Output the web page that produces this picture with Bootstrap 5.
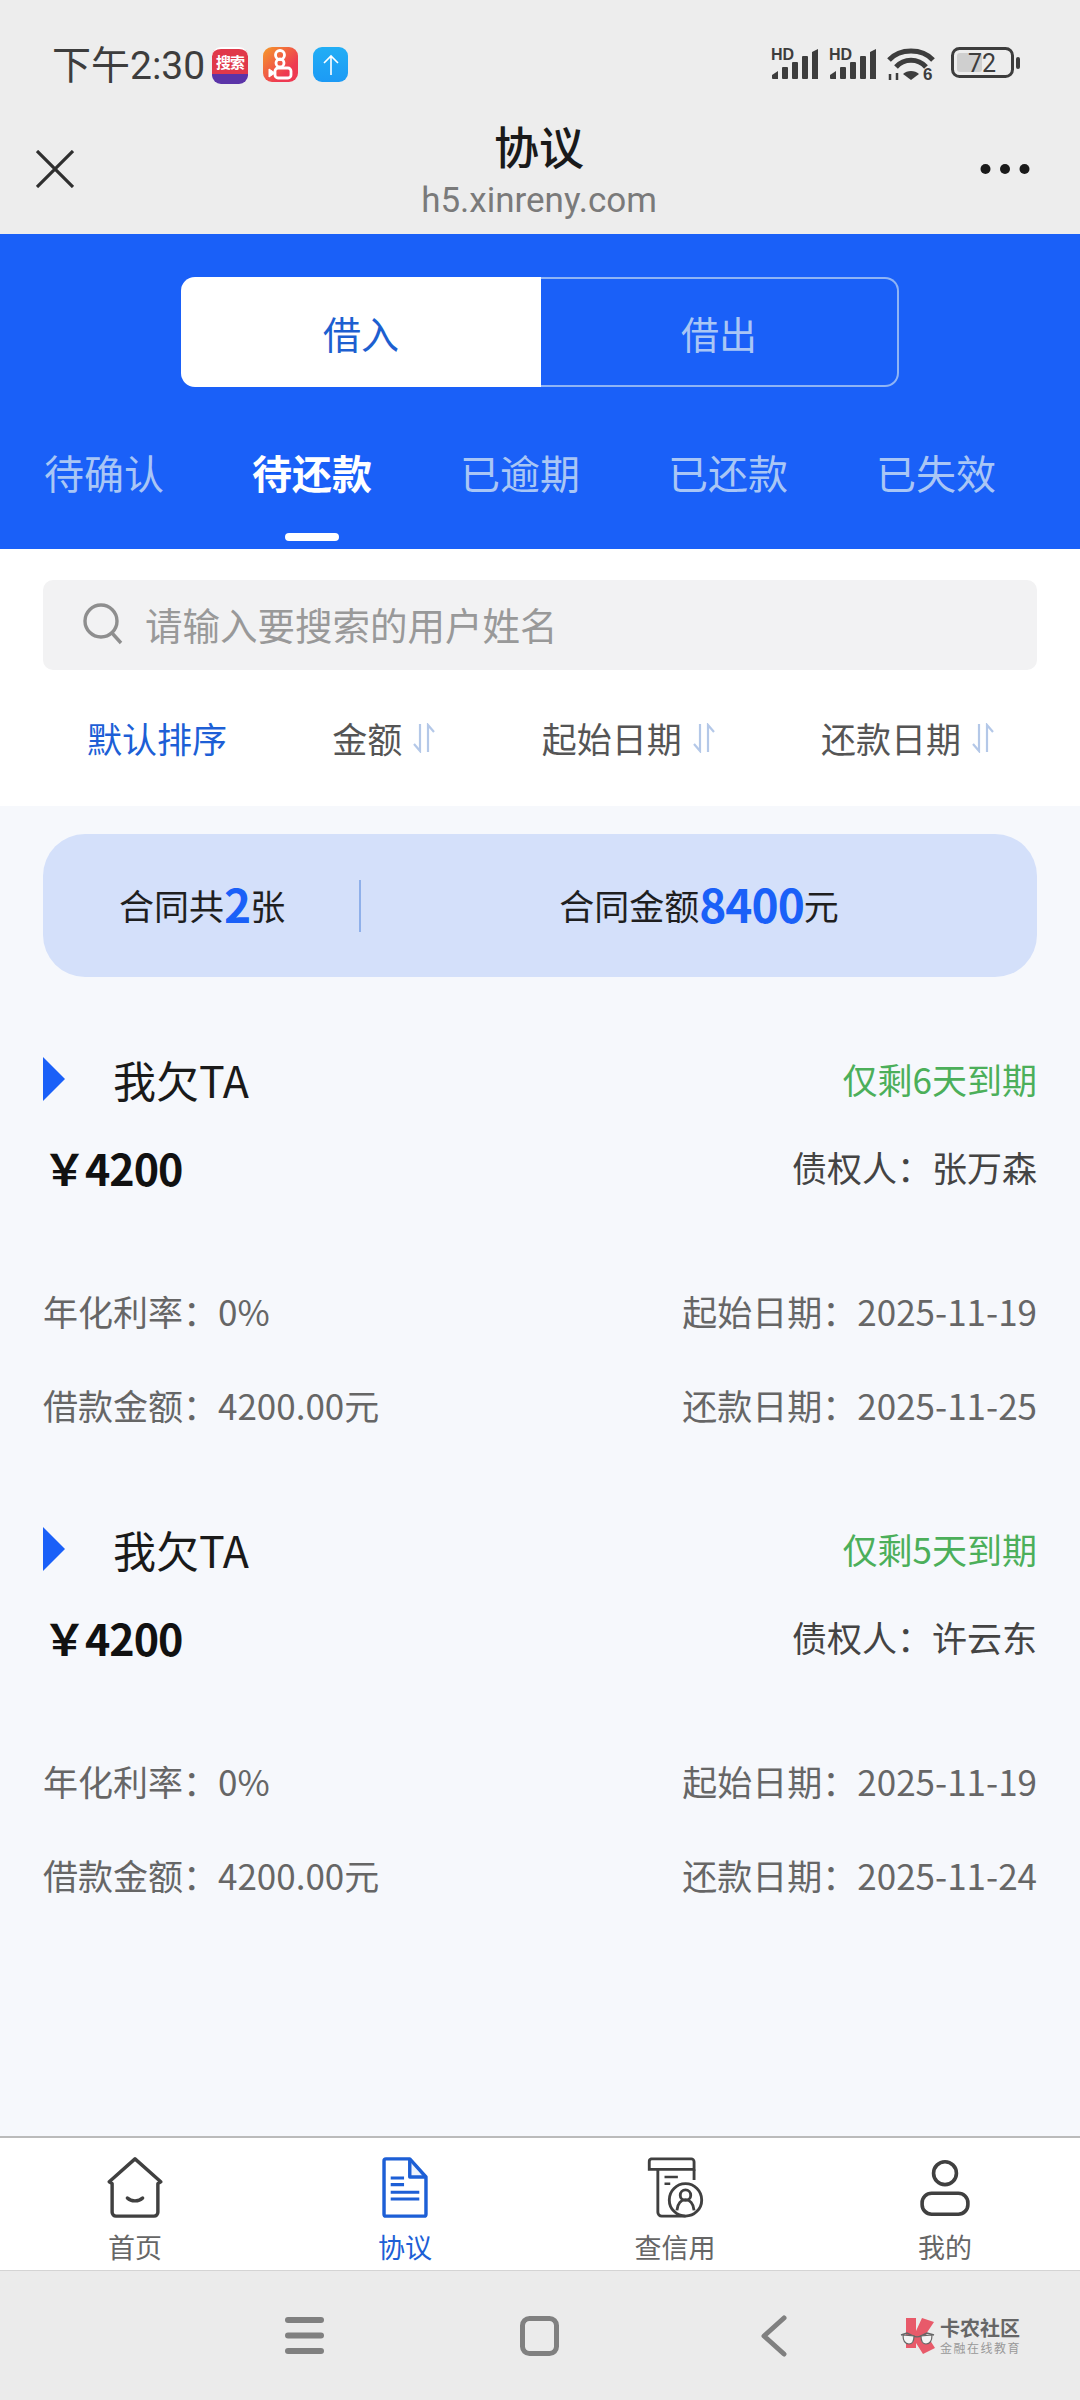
<!DOCTYPE html>
<html lang="zh-CN">
<head>
  <meta charset="UTF-8" />
  <meta name="viewport" content="width=device-width, initial-scale=1.0"/>
  <title>协议</title>
  <link href="https://cdn.jsdelivr.net/npm/bootstrap@5.3.0/dist/css/bootstrap.min.css" rel="stylesheet"/>
  <style>
    body { width: 1080px; height: 2400px; overflow: hidden; background: #f6f8fc; font-family: "Noto Sans CJK SC", "Liberation Sans", sans-serif; color: #1a1a1a; }
    .page-wrap { height: 2400px; }

    .status-bar { height: 110px; background: #ededed; padding: 47px 59px 0 52px; }
    .status-time { font-family: "Roboto", "Noto Sans CJK SC", sans-serif; font-size: 39px; line-height: 38px; color: #3d3d3d; width: 160px; white-space: nowrap; }
    .app-icon { width: 35px; height: 35px; border-radius: 9px; flex: none; }
    .app-search { width: 36px; height: 37px; background: #e0384a; color: #fff; font-size: 15px; line-height: 25px; font-weight: 700; text-align: center; overflow: hidden; border-top: 2px solid #fff; border-bottom: 10px solid #5b34a8; margin-right: 15px; white-space: nowrap; letter-spacing: -1px; }
    .app-kuai { background: linear-gradient(135deg, #f59a2a, #ee3a52 70%); margin-right: 15px; }
    .app-up { background: linear-gradient(180deg, #22aef5, #1c9af5); }

    .title-bar { height: 124px; background: #ededed; padding: 0 50px 0 36px; }
    .title-main { font-size: 45px; line-height: 60px; margin-top: 6px; margin-right: 2px; color: #1a1a1a; font-weight: 500; }
    .title-url { font-family: "Roboto", sans-serif; font-size: 35px; line-height: 40px; margin-top: 5px; margin-right: 2px; color: #7a7a7a; }
    .title-center { position: absolute; left: 0; right: 0; top: 0; }
    .title-icon { position: relative; top: -3px; }

    .blue-head { height: 315px; background: #1a60f8; }
    .seg-wrap { width: 718px; height: 110px; margin: 43px 0 0 181px; font-size: 38px; }
    .seg-on { width: 360px; background: #fff; color: #1d5fd0; border-radius: 14px 0 0 14px; }
    .seg-off { flex: 1; color: #a9c6f5; border: 2px solid #8fb4f5; border-left: 0; border-radius: 0 14px 14px 0; }
    .tab-row { padding: 0; margin-top: 55px; width: 1040px; }
    .tab-item { width: 208px; font-size: 40px; line-height: 60px; color: #a9c6f5; text-align: center; }
    .tab-item.is-on { color: #fff; font-weight: 700; position: relative; }
    .tab-item.is-on::after { content: ""; position: absolute; left: 77px; bottom: -39px; width: 54px; height: 8px; border-radius: 4px; background: #fff; }

    .filter-box { height: 257px; background: #fff; padding: 31px 43px 0; }
    .search-box { height: 90px; background: #f2f2f3; border-radius: 10px; padding-left: 40px; padding-bottom: 2px; font-size: 37.500px; color: #999; gap: 22px; }
    .sort-row { padding: 0 42px 0 44px; margin-top: 41px; font-size: 35px; line-height: 54px; color: #555; }
    .sort-row .is-on { color: #1d5fd6; }
    .sort-col { gap: 10px; }

    .sum-box { height: 143px; margin: 28px 43px 0; background: #d4e0fa; border-radius: 42px; font-size: 35px; color: #1f1f1f; }
    .sum-left { width: 318px; padding-left: 76px; height: 52px; border-right: 2px solid #8fb0ea; }
    .sum-num { font-size: 46px; color: #1a60f8; font-weight: 700; line-height: 1; letter-spacing: -1px; margin-top: -5px; }
    .sum-right { flex: 1; }

    .bill-item { padding: 0 43px; height: 470px; }
    .bill-first { margin-top: 65px; }
    .bill-head { height: 74px; }
    .bill-mark { width: 0; height: 0; border-left: 22px solid #1a60f8; border-top: 22px solid transparent; border-bottom: 22px solid transparent; margin-right: 48px; }
    .bill-who { font-size: 43px; color: #1a1a1a; }
    .bill-left { font-size: 35px; color: #4caf5a; }
    .bill-money-row { height: 58px; margin-top: 22px; }
    .bill-money { font-size: 43px; font-weight: 700; color: #111; letter-spacing: -1px; }
    .bill-owner { font-size: 35px; color: #444; }
    .bill-line { font-size: 35px; color: #666; height: 52px; }
    .bill-line1 { margin-top: 89px; }
    .bill-line2 { margin-top: 42px; }

    .tab-bar { height: 134px; background: #fff; border-top: 2px solid #bbb; }
    .tab-cell { width: 270px; padding-top: 19px; font-size: 27px; line-height: 40px; color: #666; }
    .tab-cell svg { display: block; height: 61px; margin-bottom: 9px; }
    .tab-cell.is-on { color: #1d5fd6; }

    .sys-bar { height: 130px; background: #ebebeb; border-top: 1px solid #d4d4d4; padding-left: 285px; }
    .sys-home { margin-left: 196px; }
    .sys-back { margin-left: 202px; }
    .sys-logo { margin-left: 113px; width: 122px; }
    .logo-big { font-size: 20px; line-height: 24px; font-weight: 700; color: #666; white-space: nowrap; }
    .logo-small { font-size: 12px; line-height: 16px; color: #999; letter-spacing: 1.500px; white-space: nowrap; }
  </style>
</head>
<body>
  <div class="page-wrap d-flex flex-column">

    <div class="status-bar d-flex align-items-start">
      <div class="status-time">下午2:30</div>
      <div class="app-icon app-search">搜索</div>
      <div class="app-icon app-kuai d-flex align-items-center justify-content-center">
        <svg width="28" height="31" viewBox="0 0 28 31" fill="none" stroke="#fff" stroke-width="2.800"><circle cx="13" cy="6" r="4.500"/><circle cx="13" cy="14" r="4"/><rect x="8" y="19" width="16" height="10" rx="3"/><path d="M8 24 2 20v8l6-4" fill="#fff" stroke-width="1"/></svg>
      </div>
      <div class="app-icon app-up d-flex align-items-center justify-content-center">
        <svg width="18" height="22" viewBox="0 0 18 22" fill="none" stroke="#fff" stroke-width="1.600"><path d="M9 21V2M2 9l7-7 7 7"/></svg>
      </div>
      <div class="ms-auto d-flex align-items-start">
        <svg width="50" height="33" viewBox="0 0 50 33" fill="#3d3d3d"><text x="0" y="13" font-family="Liberation Sans" font-size="16" font-weight="700">HD</text><path d="M1 28l6-4v8H2a1 1 0 0 1-1-1z"/><rect x="11" y="20" width="6" height="12" rx="1"/><rect x="21" y="15" width="6" height="17" rx="1"/><rect x="31" y="9" width="6" height="23" rx="1"/><path d="M41 5l6-3v30h-6z"/></svg>
        <svg class="ms-2" width="50" height="33" viewBox="0 0 50 33" fill="#3d3d3d"><text x="0" y="13" font-family="Liberation Sans" font-size="16" font-weight="700">HD</text><path d="M1 28l6-4v8H2a1 1 0 0 1-1-1z"/><rect x="11" y="20" width="6" height="12" rx="1"/><rect x="21" y="15" width="6" height="17" rx="1"/><rect x="31" y="9" width="6" height="23" rx="1"/><path d="M41 5l6-3v30h-6z"/></svg>
        <svg class="ms-2" width="48" height="42" viewBox="0 0 48 42" fill="none" stroke="#3d3d3d" stroke-width="5"><path d="M2 13C13 1 35 1 46 13"/><path d="M9 20C17 11 31 11 39 20"/><path d="M24 33l-8-6c4-4 12-4 16 0z" fill="#3d3d3d" stroke="none"/><text x="36" y="33" font-family="Liberation Sans" font-size="17" font-weight="700" fill="#3d3d3d" stroke="none">6</text><path d="M3 27v6M10 26v7" stroke-width="2.500"/></svg>
        <svg class="ms-3" width="70" height="32" viewBox="0 0 70 32" fill="none"><rect x="1.500" y="1.500" width="60" height="28" rx="7" stroke="#3d3d3d" stroke-width="3"/><rect x="6" y="6" width="25" height="19" rx="3" fill="#cfcfcf"/><text x="31" y="24.500" text-anchor="middle" font-family="Roboto" font-size="25" fill="#3d3d3d">72</text><rect x="65" y="10" width="4" height="12" rx="2" fill="#3d3d3d"/></svg>
      </div>
    </div>

    <div class="title-bar position-relative d-flex align-items-center justify-content-between">
      <div class="title-center text-center">
        <div class="title-main">协议</div>
        <div class="title-url">h5.xinreny.com</div>
      </div>
      <svg class="title-icon" width="38" height="38" viewBox="0 0 38 38" stroke="#2f2f2f" stroke-width="3.200"><path d="M1 1l36 36M37 1 1 37"/></svg>
      <svg class="title-icon" width="50" height="12" viewBox="0 0 50 12" fill="#1a1a1a"><circle cx="5.500" cy="6" r="5"/><circle cx="25" cy="6" r="5"/><circle cx="44.500" cy="6" r="5"/></svg>
    </div>

    <div class="blue-head">
      <div class="seg-wrap d-flex">
        <div class="seg-on d-flex align-items-center justify-content-center">借入</div>
        <div class="seg-off d-flex align-items-center justify-content-center">借出</div>
      </div>
      <div class="tab-row d-flex">
        <div class="tab-item">待确认</div>
        <div class="tab-item is-on">待还款</div>
        <div class="tab-item">已逾期</div>
        <div class="tab-item">已还款</div>
        <div class="tab-item">已失效</div>
      </div>
    </div>

    <div class="filter-box">
      <div class="search-box d-flex align-items-center">
        <svg width="40" height="42" viewBox="0 0 40 42" fill="none" stroke="#8e8e8e" stroke-width="3.400"><circle cx="18" cy="18" r="16"/><path d="M29 30l9 10"/></svg>
        <span>请输入要搜索的用户姓名</span>
      </div>
      <div class="sort-row d-flex justify-content-between align-items-center">
        <div class="is-on">默认排序</div>
        <div class="sort-col d-flex align-items-center">金额<svg width="24" height="30" viewBox="0 0 24 30" fill="none" stroke="#b4c8e8" stroke-width="2.200"><path d="M8 1v27L2 21M16 29V2l6 7"/></svg></div>
        <div class="sort-col d-flex align-items-center">起始日期<svg width="24" height="30" viewBox="0 0 24 30" fill="none" stroke="#b4c8e8" stroke-width="2.200"><path d="M8 1v27L2 21M16 29V2l6 7"/></svg></div>
        <div class="sort-col d-flex align-items-center">还款日期<svg width="24" height="30" viewBox="0 0 24 30" fill="none" stroke="#b4c8e8" stroke-width="2.200"><path d="M8 1v27L2 21M16 29V2l6 7"/></svg></div>
      </div>
    </div>

    <main class="flex-grow-1">
      <div class="sum-box d-flex align-items-center">
        <div class="sum-left d-flex align-items-center">合同共<span class="sum-num">2</span>张</div>
        <div class="sum-right d-flex align-items-center justify-content-center">合同金额<span class="sum-num">8400</span>元</div>
      </div>

      <div class="bill-item bill-first">
        <div class="bill-head d-flex align-items-center">
          <div class="bill-mark"></div>
          <div class="bill-who">我欠TA</div>
          <div class="bill-left ms-auto">仅剩6天到期</div>
        </div>
        <div class="bill-money-row d-flex justify-content-between align-items-center">
          <div class="bill-money">￥4200</div>
          <div class="bill-owner">债权人：张万森</div>
        </div>
        <div class="bill-line bill-line1 d-flex justify-content-between align-items-center"><span>年化利率：0%</span><span>起始日期：2025-11-19</span></div>
        <div class="bill-line bill-line2 d-flex justify-content-between align-items-center"><span>借款金额：4200.00元</span><span>还款日期：2025-11-25</span></div>
      </div>

      <div class="bill-item">
        <div class="bill-head d-flex align-items-center">
          <div class="bill-mark"></div>
          <div class="bill-who">我欠TA</div>
          <div class="bill-left ms-auto">仅剩5天到期</div>
        </div>
        <div class="bill-money-row d-flex justify-content-between align-items-center">
          <div class="bill-money">￥4200</div>
          <div class="bill-owner">债权人：许云东</div>
        </div>
        <div class="bill-line bill-line1 d-flex justify-content-between align-items-center"><span>年化利率：0%</span><span>起始日期：2025-11-19</span></div>
        <div class="bill-line bill-line2 d-flex justify-content-between align-items-center"><span>借款金额：4200.00元</span><span>还款日期：2025-11-24</span></div>
      </div>
    </main>

    <nav class="tab-bar d-flex">
      <div class="tab-cell d-flex flex-column align-items-center">
        <svg width="58" height="64" viewBox="0 0 58 64" fill="none" stroke="#404040" stroke-width="3.600" stroke-linejoin="round"><path d="M29 2 2 26l3 2v30a4 4 0 0 0 4 4h40a4 4 0 0 0 4-4V28l3-2z"/><path d="M21 43c4 4 12 4 16 0" stroke-linecap="round"/></svg>
        <span>首页</span>
      </div>
      <div class="tab-cell is-on d-flex flex-column align-items-center">
        <svg width="48" height="64" viewBox="0 0 48 64" fill="none" stroke="#1d5fd6" stroke-width="3.600" stroke-linejoin="round"><path d="M4 2h25l17 19v39a2 2 0 0 1-2 2H4a2 2 0 0 1-2-2V4a2 2 0 0 1 2-2z"/><path d="M29 2v19h17" fill="#1d5fd6" fill-opacity=".08"/><path d="M9 22h14M9 29h14M9 37h30M9 44h30" stroke-width="3.200"/></svg>
        <span>协议</span>
      </div>
      <div class="tab-cell d-flex flex-column align-items-center">
        <svg width="58" height="64" viewBox="0 0 58 64" fill="none" stroke="#404040" stroke-width="3"><path d="M4 2h42a3 3 0 0 1 3 3v8H2V5a3 3 0 0 1 2-3z"/><path d="M11 13v45a4 4 0 0 0 4 4h25M49 13v11"/><path d="M18 21h14M18 28h6" stroke-width="2.600"/><circle cx="40" cy="45" r="17"/><circle cx="40" cy="40" r="5.500"/><path d="M31 56c1-15 17-15 18 0"/></svg>
        <span>查信用</span>
      </div>
      <div class="tab-cell d-flex flex-column align-items-center">
        <svg width="52" height="64" viewBox="0 0 52 64" fill="none" stroke="#404040" stroke-width="3.800"><circle cx="26" cy="17" r="12"/><rect x="2" y="38" width="48" height="22" rx="10"/></svg>
        <span>我的</span>
      </div>
    </nav>

    <div class="sys-bar d-flex align-items-center">
      <svg width="39" height="37" viewBox="0 0 39 37" fill="#808080"><rect width="39" height="6" y="0" rx="3"/><rect width="39" height="6" y="15.500" rx="3"/><rect width="39" height="6" y="31" rx="3"/></svg>
      <svg class="sys-home" width="39" height="40" viewBox="0 0 39 40" fill="none" stroke="#808080" stroke-width="5"><rect x="2.500" y="2.500" width="34" height="35" rx="7"/></svg>
      <svg class="sys-back" width="26" height="42" viewBox="0 0 26 42" fill="none" stroke="#808080" stroke-width="5" stroke-linecap="round" stroke-linejoin="round"><path d="M23 3 3 21l20 18"/></svg>
      <div class="sys-logo d-flex align-items-center gap-1">
        <svg width="36" height="38" viewBox="0 0 36 38"><path d="M6 1h10v13L22 1l12 4-8 12 9 14-12 6-7-11v5H6z" fill="#e85a6a"/><path d="M1 18l6-2 6 3c2 1 6 1 8 0l6-3 7 2" fill="none" stroke="#666" stroke-width="1.500"/><path d="M3 18c0 6 2 9 6 9s5-3 5-8zM21 19c0 5 1 8 5 8s6-3 6-9z" fill="#f4f4f4" stroke="#666" stroke-width="1.200"/></svg>
        <div>
          <div class="logo-big">卡农社区</div>
          <div class="logo-small">金融在线教育</div>
        </div>
      </div>
    </div>

  </div>
</body>
</html>
